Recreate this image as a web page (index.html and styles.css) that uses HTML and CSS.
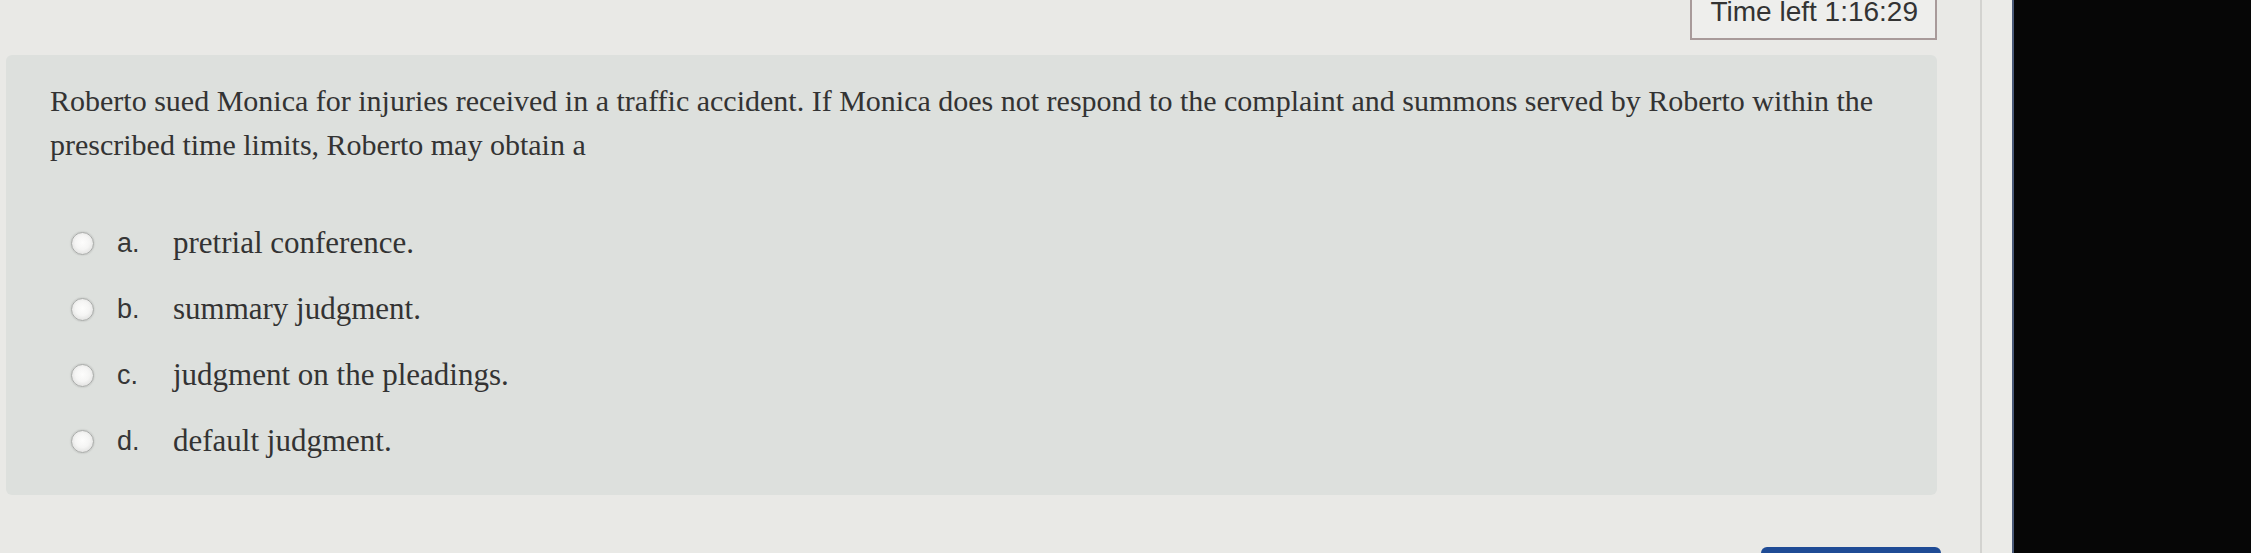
FILE: index.html
```html
<!DOCTYPE html>
<html lang="en">
<head>
<meta charset="utf-8">
<title>Quiz question</title>
<link rel="stylesheet" href="styles.css">
</head>
<body>
<div class="screen">
  <div class="page">
    <div class="timer-row">
      <div class="timer">Time left 1:16:29</div>
    </div>
    <div class="question">
      <p class="qtext">Roberto sued Monica for injuries received in a traffic accident. If Monica does not respond to the complaint and summons served by Roberto within the prescribed time limits, Roberto may obtain a</p>
      <div class="answers">
        <div class="answer"><span class="radio"></span><span class="letter">a.</span><span class="atext">pretrial conference.</span></div>
        <div class="answer"><span class="radio"></span><span class="letter">b.</span><span class="atext">summary judgment.</span></div>
        <div class="answer"><span class="radio"></span><span class="letter">c.</span><span class="atext">judgment on the pleadings.</span></div>
        <div class="answer"><span class="radio"></span><span class="letter">d.</span><span class="atext">default judgment.</span></div>
      </div>
    </div>
    <div class="nav-row">
      <div class="next-btn"></div>
    </div>
  </div>
  <div class="divider"></div>
  <div class="gutter"></div>
  <div class="edge"></div>
  <div class="dark"></div>
</div>
</body>
</html>
```
FILE: styles.css
```css
html, body {
  margin: 0;
  padding: 0;
  height: 100%;
  overflow: hidden;
  background: #e9e9e6;
}
.screen {
  display: flex;
  height: 553px;
  width: 2251px;
}
.page {
  width: 1931px;
  padding: 0 43px 0 6px;
  flex: none;
  background: #e9e9e6;
}
.timer-row {
  display: flex;
  justify-content: flex-end;
}
.timer {
  font-family: "Liberation Sans", Arial, sans-serif;
  font-size: 28px;
  line-height: 24px;
  color: #333;
  background: #eeeeec;
  border: 2px solid #a89a9a;
  border-top: none;
  padding: 0 17px 14px 18px;
}
.question {
  margin-top: 15px;
  background: #dde0dd;
  border-radius: 6px;
  padding: 24px 40px 23px 44px;
  height: 393px;
}
.qtext {
  margin: 0;
  font-family: "Liberation Serif", "Times New Roman", serif;
  font-size: 30px;
  line-height: 44px;
  color: #333;
}
.answers {
  margin-top: 43px;
  margin-left: 21px;
}
.answer {
  display: flex;
  align-items: center;
  height: 66px;
}
.radio {
  width: 21px;
  height: 21px;
  border-radius: 50%;
  border: 1px solid #a9aba9;
  background: radial-gradient(circle at 50% 45%, #fdfdfc 0%, #f5f5f4 45%, #d3d4d2 100%);
  box-shadow: 0 0 2px rgba(0, 0, 0, 0.2);
  flex: none;
}
.letter {
  font-family: "Liberation Sans", Arial, sans-serif;
  font-size: 27px;
  color: #363636;
  margin-left: 23px;
  width: 56px;
  flex: none;
}
.atext {
  font-family: "Liberation Serif", "Times New Roman", serif;
  font-size: 31px;
  color: #333;
}
.nav-row {
  display: flex;
  justify-content: flex-end;
  margin-top: 52px;
}
.next-btn {
  width: 180px;
  height: 30px;
  background: #1f4b95;
  border-radius: 6px 6px 0 0;
  margin-right: -4px;
}
.divider {
  width: 2px;
  flex: none;
  background: #d3d3d0;
}
.gutter {
  width: 30px;
  flex: none;
  background: #ebebe8;
}
.edge {
  width: 2px;
  flex: none;
  background: #4a5a78;
}
.dark {
  flex: 1;
  background: #060606;
}
```
